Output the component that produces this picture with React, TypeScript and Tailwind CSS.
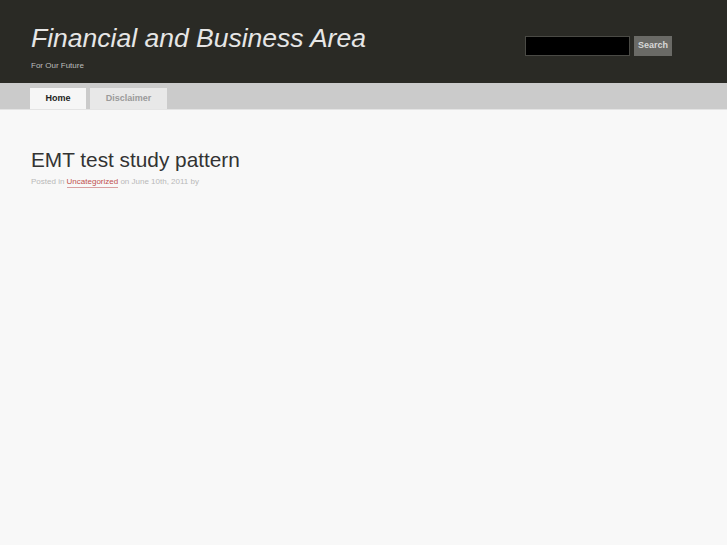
import React from "react";

export default function App() {
  const sans = { fontFamily: '"Liberation Sans", Arial, sans-serif' };
  return (
    <div className="min-h-[545px] w-full bg-[#f8f8f8]" style={sans}>
      <div className="h-[83px] bg-[#2a2a25] flex justify-between">
        <div className="pl-[31px] pt-[22px]">
          <div className="text-[26.5px] italic text-[#e6e6e6] leading-[32px]">
            Financial and Business Area
          </div>
          <div className="text-[8px] text-[#bdbdbd] mt-[7px] leading-[10px]">For Our Future</div>
        </div>
        <div className="flex pt-[36px] pr-[55px] gap-[4px] items-start">
          <div className="w-[105px] h-[20px] bg-black border border-[#4a4a45]" />
          <div className="w-[38px] h-[20px] bg-[#6a6a66] text-[#d8d8d8] text-[9px] font-bold flex items-center justify-center">
            Search
          </div>
        </div>
      </div>
      <div className="h-[27px] bg-[#cbcbcb] flex items-end pl-[30px] gap-[4px] border-b border-[#e4e4e4]">
        <div className="w-[56px] h-[21px] bg-[#f6f6f6] text-[9px] font-bold text-[#222] flex items-center justify-center">
          Home
        </div>
        <div className="w-[77px] h-[21px] bg-[#e8e8e8] text-[9px] font-bold text-[#9a9a9a] flex items-center justify-center">
          Disclaimer
        </div>
      </div>
      <div className="pl-[31px] pt-[37px]">
        <div className="text-[20.8px] text-[#333] leading-[26px]">EMT test study pattern</div>
        <div className="text-[8px] text-[#b8b8b8] mt-[4px] leading-[10px]">
          Posted in{" "}
          <span className="text-[#c0504d] border-b border-[#d9a0a0] pb-[1px]">Uncategorized</span> on June 10th, 2011 by
        </div>
      </div>
    </div>
  );
}
